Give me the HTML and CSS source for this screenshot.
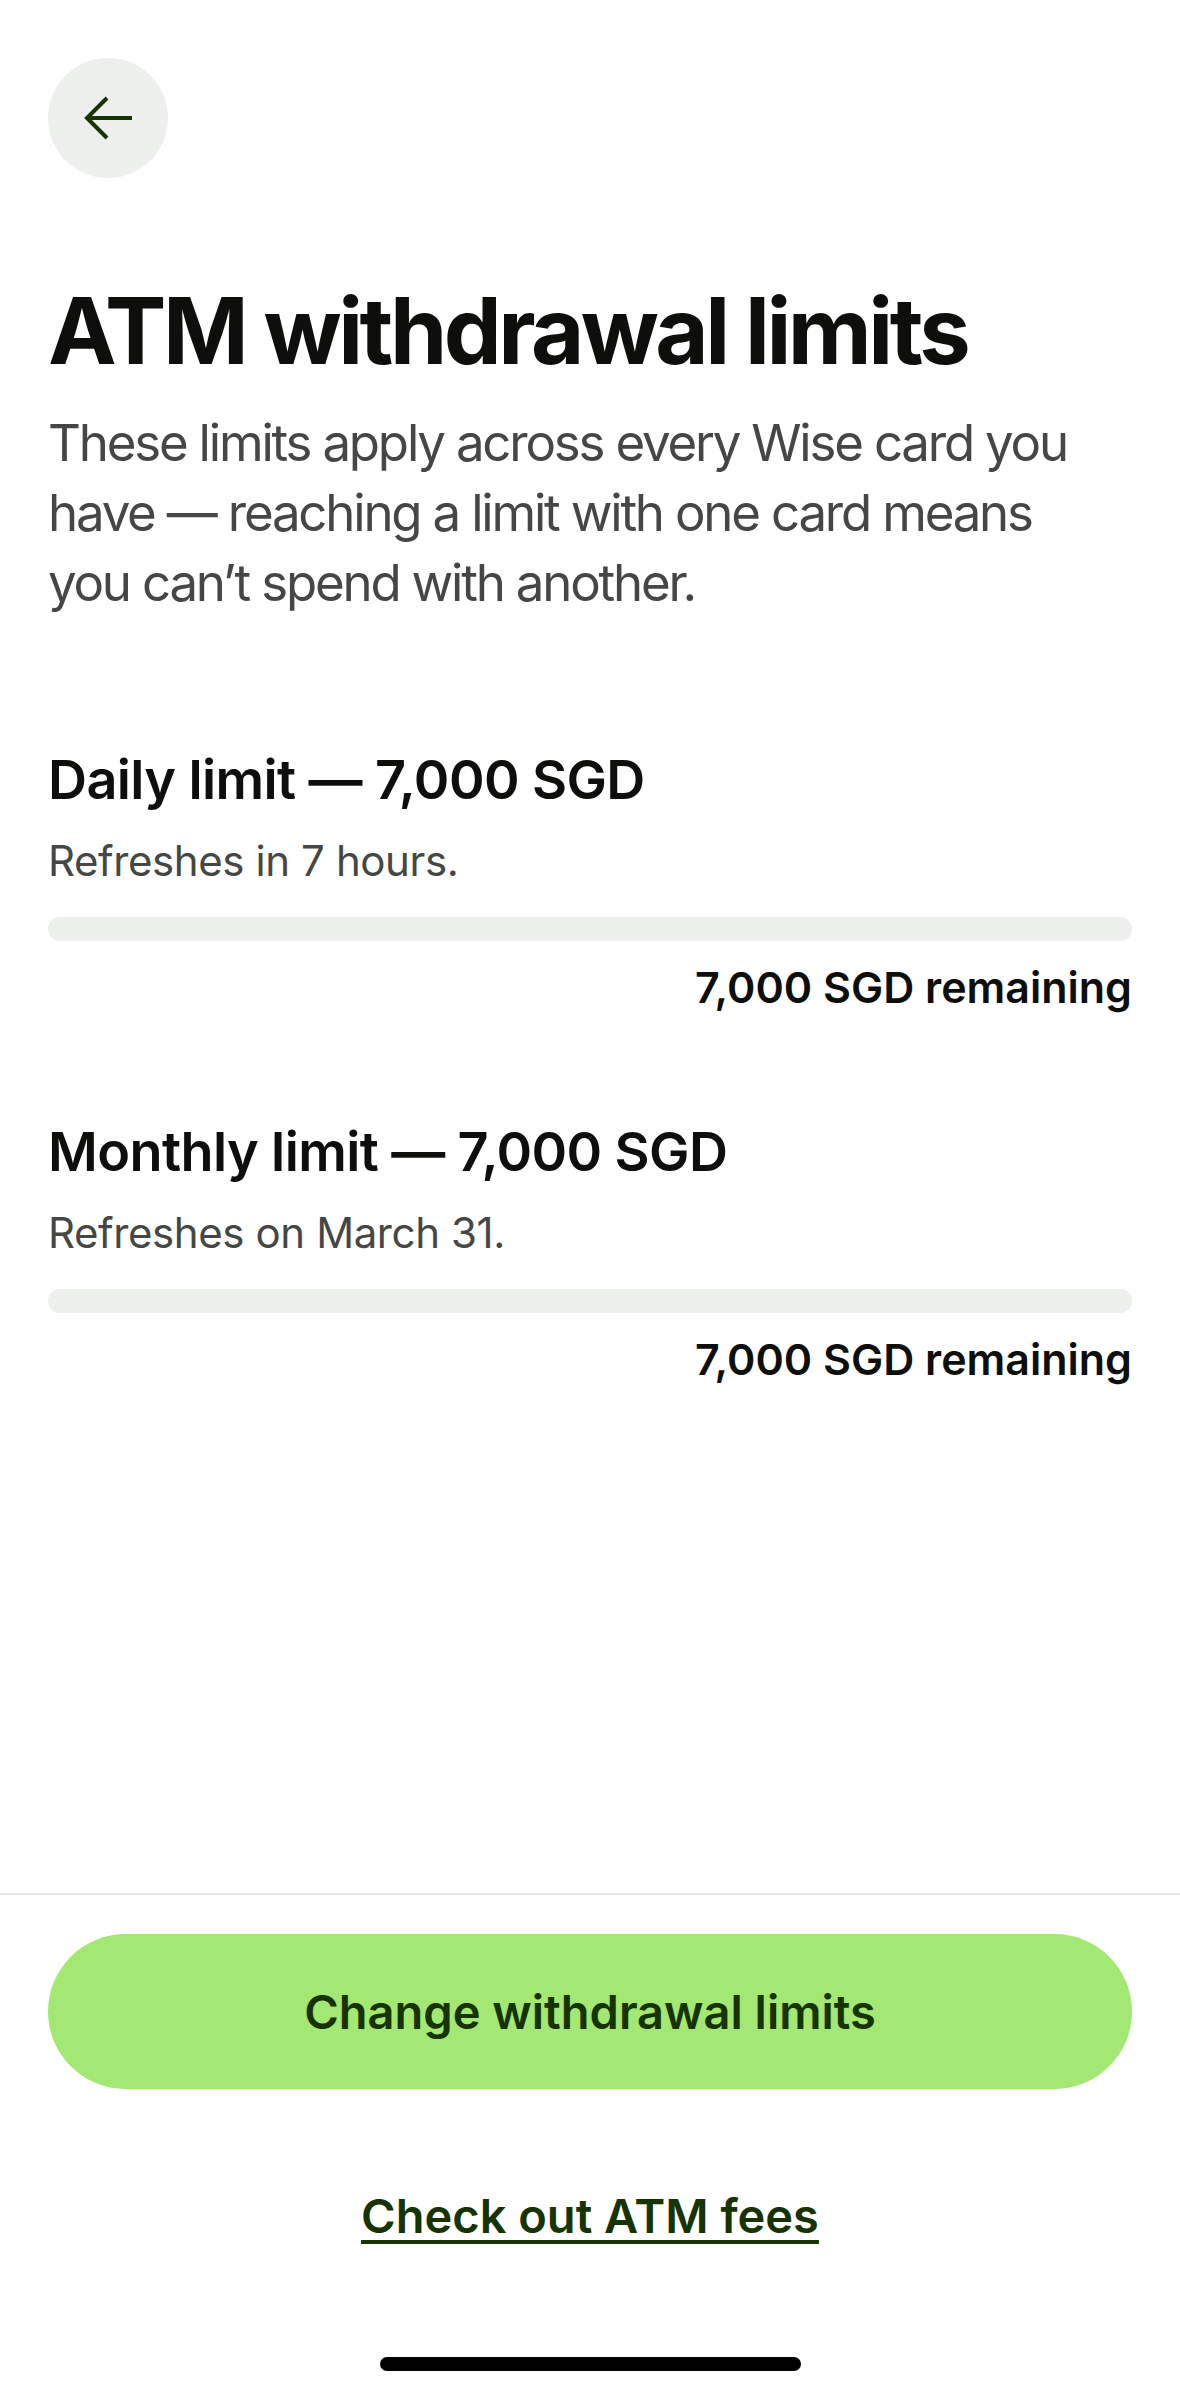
FILE: index.html
```html
<!DOCTYPE html>
<html lang="en">
<head>
    <meta charset="UTF-8">
    <meta name="viewport" content="width=device-width, initial-scale=1.0">
    <title>ATM withdrawal limits</title>
    <link rel="stylesheet" href="styles.css">
</head>
<body>
    <div class="screen">
        <div class="content">
            <button class="back-btn" aria-label="Back">
                <svg width="52" height="44" viewBox="0 0 52 44" fill="none" stroke="#163300" stroke-width="4">
                    <path d="M50 22H5M25 2L5 22L25 42"/>
                </svg>
            </button>

            <h1>ATM withdrawal limits</h1>
            <p class="intro">These limits apply across every Wise card you have — reaching a limit with one card means you can’t spend with another.</p>

            <div class="limit">
                <h2>Daily limit — 7,000 SGD</h2>
                <p class="refresh">Refreshes in 7 hours.</p>
                <div class="bar"><div class="bar-fill" style="width: 0%"></div></div>
                <p class="remaining">7,000 SGD remaining</p>
            </div>

            <div class="limit">
                <h2>Monthly limit — 7,000 SGD</h2>
                <p class="refresh">Refreshes on March 31.</p>
                <div class="bar"><div class="bar-fill" style="width: 0%"></div></div>
                <p class="remaining">7,000 SGD remaining</p>
            </div>
        </div>

        <div class="footer">
            <button class="primary-btn">Change withdrawal limits</button>
            <a class="fees-link" href="#">Check out ATM fees</a>
            <div class="home-indicator"></div>
        </div>
    </div>
</body>
</html>
```

FILE: styles.css
```css
body {
    margin: 0;
    padding: 0;
    background: #fff;
    font-family: 'Inter', 'Open Sans', sans-serif;
    color: #0e0f0c;
}

.screen {
    display: flex;
    flex-direction: column;
    min-height: 2396px;
}

.content {
    padding: 58px 48px 0;
}

.back-btn {
    display: flex;
    align-items: center;
    justify-content: center;
    width: 120px;
    height: 120px;
    padding: 0;
    border: none;
    border-radius: 50%;
    background: #edefec;
}

h1 {
    margin: 98px 0 0;
    font-size: 92px;
    line-height: 110px;
    font-weight: 700;
    letter-spacing: -3.5px;
}

.intro {
    margin: 22px 0 0;
    padding-right: 40px;
    font-size: 51px;
    line-height: 70px;
    letter-spacing: -2.2px;
    color: #454745;
}

.limit {
    margin-top: 101px;
}

.intro + .limit {
    margin-top: 126px;
}

.limit h2 {
    margin: 0;
    font-size: 54px;
    line-height: 72px;
    font-weight: 600;
    letter-spacing: -0.6px;
}

.refresh {
    margin: 17px 0 0;
    font-size: 42px;
    line-height: 56px;
    letter-spacing: -0.4px;
    color: #454745;
}

.bar {
    margin-top: 28px;
    height: 24px;
    border-radius: 12px;
    background: #edefec;
    overflow: hidden;
}

.bar-fill {
    height: 100%;
    background: #163300;
}

.remaining {
    margin: 18px 0 0;
    text-align: right;
    font-size: 43px;
    line-height: 56px;
    font-weight: 600;
}

.footer {
    margin-top: auto;
    display: flex;
    flex-direction: column;
    align-items: center;
    border-top: 2px solid #e6e7e5;
    padding: 39px 48px 25px;
}

.primary-btn {
    width: 100%;
    height: 155px;
    border: none;
    border-radius: 78px;
    background: #a2e873;
    color: #163300;
    font-family: inherit;
    font-size: 47px;
    font-weight: 600;
}

.fees-link {
    margin-top: 95px;
    font-size: 47px;
    line-height: 64px;
    font-weight: 600;
    color: #163300;
    text-decoration: underline;
    text-decoration-thickness: 4px;
    text-underline-offset: 7px;
}

.home-indicator {
    margin-top: 109px;
    width: 421px;
    height: 14px;
    border-radius: 7px;
    background: #000;
}
```
